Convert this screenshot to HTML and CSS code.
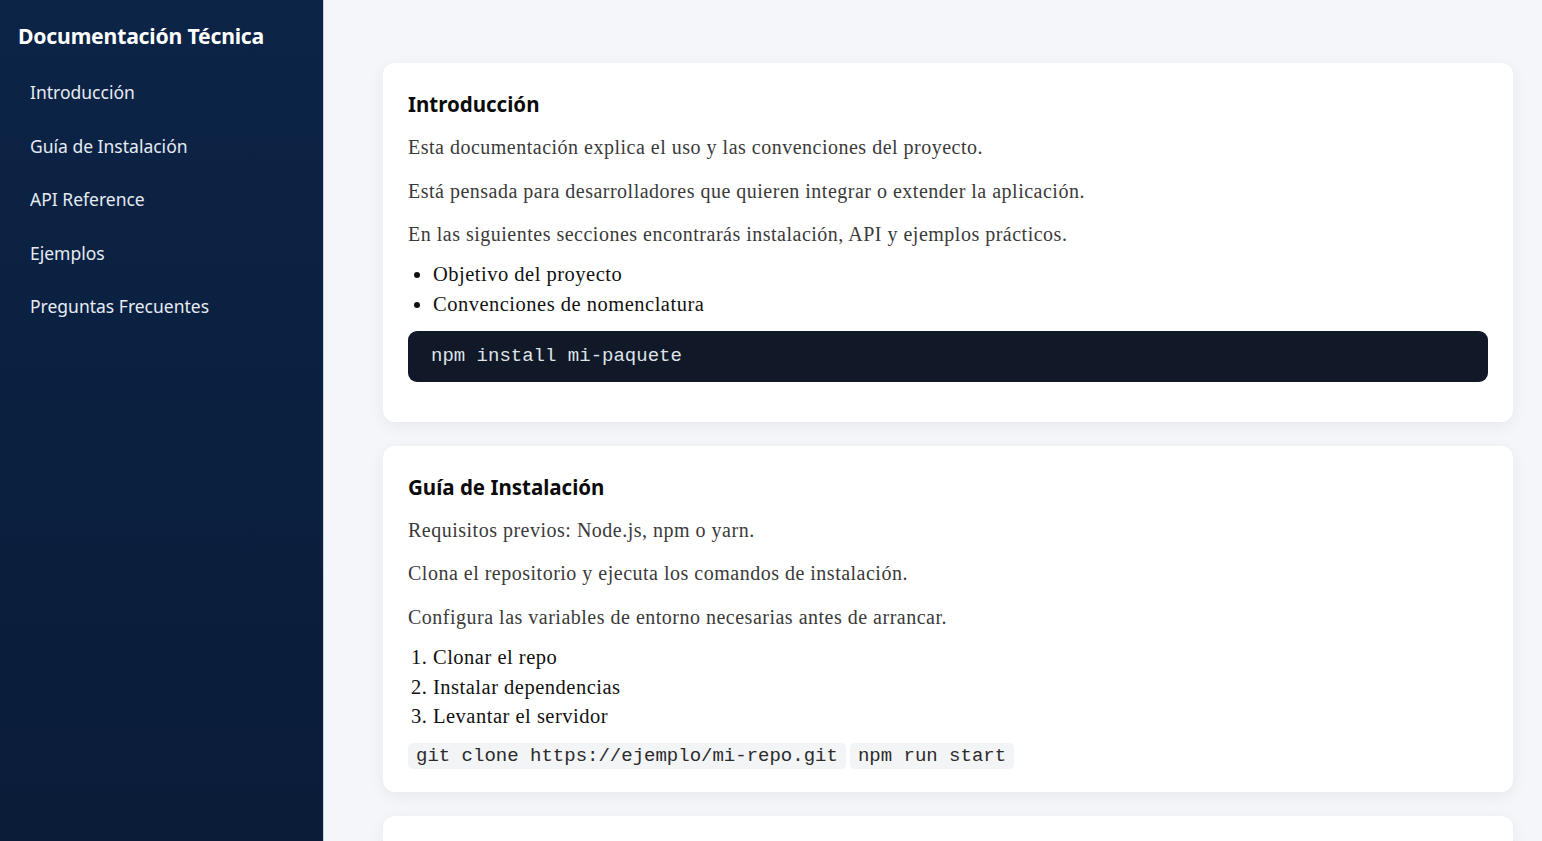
FILE: index.html
```html
<!DOCTYPE html>
<html lang="es">
<head>
<meta charset="utf-8">
<title>Documentación Técnica</title>
<link rel="stylesheet" href="styles.css">
</head>
<body>
<div class="layout">
  <aside class="sidebar">
    <div class="brand">Documentación Técnica</div>
    <nav class="nav">
      <a class="nav-link" href="#intro">Introducción</a>
      <a class="nav-link" href="#instalacion">Guía de Instalación</a>
      <a class="nav-link" href="#api">API Reference</a>
      <a class="nav-link" href="#ejemplos">Ejemplos</a>
      <a class="nav-link" href="#faq">Preguntas Frecuentes</a>
    </nav>
  </aside>
  <main class="main">
    <section class="card card-intro" id="intro">
      <h2 class="card-title">Introducción</h2>
      <p class="text">Esta documentación explica el uso y las convenciones del proyecto.</p>
      <p class="text">Está pensada para desarrolladores que quieren integrar o extender la aplicación.</p>
      <p class="text">En las siguientes secciones encontrarás instalación, API y ejemplos prácticos.</p>
      <ul class="list">
        <li>Objetivo del proyecto</li>
        <li>Convenciones de nomenclatura</li>
      </ul>
      <pre class="code-block"><code class="code-text">npm install mi-paquete</code></pre>
    </section>
    <section class="card card-install" id="instalacion">
      <h2 class="card-title">Guía de Instalación</h2>
      <p class="text">Requisitos previos: Node.js, npm o yarn.</p>
      <p class="text">Clona el repositorio y ejecuta los comandos de instalación.</p>
      <p class="text">Configura las variables de entorno necesarias antes de arrancar.</p>
      <ol class="list list-ordered">
        <li>Clonar el repo</li>
        <li>Instalar dependencias</li>
        <li>Levantar el servidor</li>
      </ol>
      <p class="inline-codes"><code class="inline-code">git clone https://ejemplo/mi-repo.git</code> <code class="inline-code">npm run start</code></p>
    </section>
    <section class="card card-next" id="api"></section>
  </main>
</div>
</body>
</html>
```
FILE: styles.css
```css
* { box-sizing: border-box; }
html, body { margin: 0; padding: 0; height: 100%; }
body {
  background: #f4f6fa;
  font-family: "Liberation Serif", "DejaVu Serif", serif;
  color: #3a3a3a;
  overflow: hidden;
}
.layout {
  display: flex;
  height: 100vh;
}
.sidebar {
  width: 324px;
  flex: none;
  background: linear-gradient(180deg, #0c2447 0%, #0a1c38 100%);
  border-right: 1px solid #c9d2df;
  padding: 20px 0 0 18px;
  font-family: "Noto Sans", "Open Sans", sans-serif;
}
.brand {
  color: #ffffff;
  font-size: 21.2px;
  font-weight: 700;
  line-height: 32px;
  letter-spacing: -0.2px;
}
.nav {
  display: flex;
  flex-direction: column;
  margin-top: 13px;
  padding-left: 12px;
}
.nav-link {
  color: #e6ebf3;
  text-decoration: none;
  font-size: 17.5px;
  line-height: 26px;
  padding: 14px 0 13.5px;
}
.main {
  flex: 1;
  padding: 63px 29px 0 59px;
  overflow: hidden;
  display: flex;
  flex-direction: column;
  gap: 24px;
}
.card {
  background: #ffffff;
  border-radius: 12px;
  box-shadow: 0 4px 16px rgba(15, 23, 42, 0.06);
  padding: 25px 25px 39.5px;
  flex: none;
}
.card-next {
  height: 120px;
}
.card-title {
  margin: 0 0 13px;
  font-family: "Noto Sans", "Open Sans", sans-serif;
  font-size: 20.5px;
  font-weight: 700;
  line-height: 32px;
  color: #0b0b0b;
}
.text {
  margin: 0 0 14.5px;
  font-size: 20px;
  letter-spacing: 0.5px;
  line-height: 29px;
}
.list {
  margin: -4.5px 0 12px;
  padding-left: 25px;
  color: #111111;
  font-size: 20.5px;
  letter-spacing: 0.5px;
  line-height: 30px;
}
.list-ordered {
  margin-top: -3px;
  line-height: 29.5px;
}
.code-block {
  margin: 0;
  background: #111827;
  color: #dfe3ea;
  border-radius: 9px;
  padding: 11px 23px;
  font-family: "Liberation Mono", "Courier New", monospace;
  font-size: 19px;
  line-height: 29px;
}
.code-text {
  font: inherit;
}
.inline-codes {
  margin: -1px 0 0;
  line-height: 26px;
  font-size: 16px;
}
.inline-code {
  display: inline-block;
  background: #f3f4f6;
  color: #2b2b2b;
  border-radius: 5px;
  padding: 0 8px;
  font-family: "Liberation Mono", "Courier New", monospace;
  font-size: 19px;
  line-height: 26px;
}
.card-install { padding-bottom: 23.5px; }
```
